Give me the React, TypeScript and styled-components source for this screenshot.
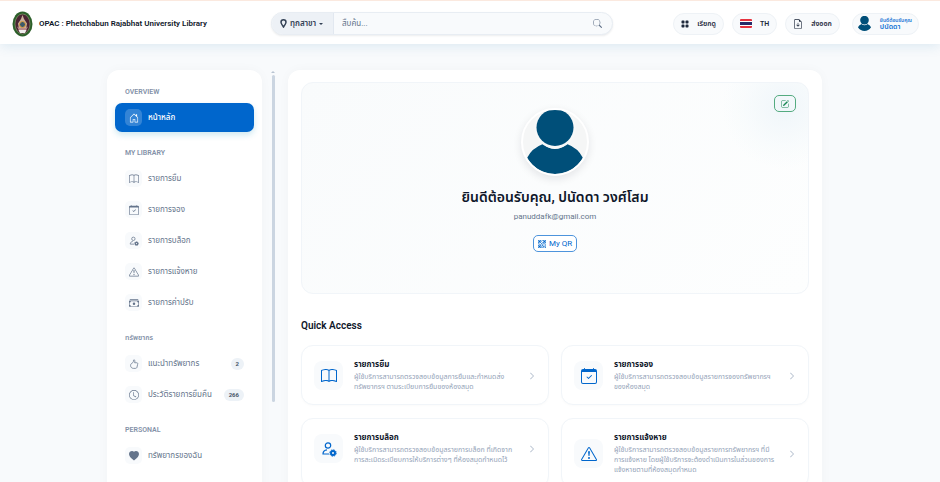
import React from 'react';
import styled, { createGlobalStyle, css } from 'styled-components';
import {
  BsSearch, BsGridFill, BsFileEarmarkArrowDown, BsHouseDoor, BsBook, BsCalendarCheck,
  BsExclamationTriangle, BsCashStack, BsClock, BsHeartFill,
  BsChevronRight, BsQrCode, BsPencilSquare,
} from 'react-icons/bs';

const Global = createGlobalStyle`
  * { box-sizing: border-box; }
  html, body, #root { height: 100%; }
  body { margin: 0; overflow: hidden; background: #f8fafc; color: #0f172a;
    font-family: Roboto, "Noto Sans Thai", "Noto Sans", sans-serif; font-size: 8px; }
  button, input { font: inherit; color: inherit; }
  button { cursor: pointer; }
  a { color: inherit; text-decoration: none; }
  h1, h2, h3, p { margin: 0; }
  svg { display: block; flex: none; }
`;

const Page = styled.div`
  display: flex; flex-direction: column; height: 100vh; overflow: hidden;
`;
const Header = styled.header`
  flex: none; height: 44px; padding: 2px 21px 0 12px;
  display: grid; grid-template-columns: minmax(0, 259fr) minmax(200px, 342px) minmax(0, 306fr);
  align-items: center; background: #fff; border-top: 1px solid #fbe9df;
  box-shadow: 0 2px 12px #0b6ca51f;
`;
const Brand = styled.a`
  display: flex; align-items: center; gap: 6px; font-size: 8px; font-weight: 600; white-space: nowrap;
`;
const Search = styled.form`
  display: flex; height: 23px; border: 1px solid #e8edf3; border-radius: 12px; overflow: hidden;
  background: #f8fafc; box-shadow: 0 1px 2px #0f172a14;
`;
const Branch = styled.button`
  display: flex; align-items: center; gap: 3px; width: 62px; padding: 0 8px; border: 0;
  border-right: 1px solid #e2e8f0; background: #edf1f6; color: #334155; font-weight: 600; white-space: nowrap;
`;
const Caret = styled.span`
  border: 2px solid transparent; border-top-color: currentColor; border-bottom: 0;
`;
const Query = styled.input`
  flex: 1; min-width: 0; padding: 0 8px; border: 0; outline: 0; background: transparent;
  &::placeholder { color: #64748b; opacity: 1; }
`;
const SearchButton = styled.button`
  width: 30px; border: 0; background: transparent; color: #64748b; display: grid; place-items: center;
`;
const Tools = styled.nav`
  display: flex; justify-content: flex-end; gap: 8px;
`;
const Pill = styled.button<{ $user?: boolean }>`
  display: flex; align-items: center; gap: 8px; height: 22px; padding: 0 7px;
  border: 1px solid #eef2f6; border-radius: 11px; background: #f8fafc; color: #1e293b;
  font-size: 7px; font-weight: 600; white-space: nowrap;
  ${p => p.$user && css`margin-left: 4px; padding: 0 6px 0 4px; color: #1473d5;`}
`;
const UserText = styled.span`
  display: grid; text-align: left; font-size: 7px; line-height: 8px; font-weight: 600;
  small { font-size: 5px; line-height: 6px; }
`;

const Body = styled.div`
  flex: 1; min-height: 0; display: flex; align-items: flex-start; justify-content: center;
  padding: 26px 23px 0 12px;
`;
const Shell = styled.div`
  width: 100%; max-width: 715px; display: grid;
  grid-template-columns: 155px 4px minmax(0, 1fr); column-gap: 9px;
`;
const Sidebar = styled.aside`
  padding: 17px 8px 24px; border-radius: 12px; background: #fff; box-shadow: 0 0 12px #0f172a08;
`;
const Track = styled.div`
  display: flex; flex-direction: column; align-items: center; gap: 2px; height: 332px;
`;
const TrackArrow = styled.span`
  margin-top: 1px; border: 2px solid transparent; border-bottom-color: #b8c3d1; border-top: 0;
`;
const TrackThumb = styled.div`
  width: 3px; flex: 1; border-radius: 2px; background: #cbd5e1;
`;
const NavTitle = styled.h2`
  padding-left: 10px; color: #8492a8; font-size: 7px; line-height: 10px; font-weight: 600;
  text-transform: uppercase;
`;
const NavList = styled.ul`
  list-style: none; margin: 6px 0 16px; padding: 0; display: grid; gap: 2px;
`;
const NavLink = styled.a<{ $active?: boolean }>`
  display: flex; align-items: center; gap: 6px; height: 29px; padding: 0 10px; border-radius: 7px;
  color: #64748b; font-size: 8px; font-weight: 400; white-space: nowrap;
  ${p => p.$active && css`background: #0066cc; color: #fff; font-weight: 500; box-shadow: 0 3px 6px #0b8bb633;`}
`;
const NavIcon = styled.span<{ $active?: boolean }>`
  display: grid; place-items: center; width: 17px; height: 17px; border-radius: 5px;
  background: ${p => (p.$active ? '#ffffff33' : '#f8fafc')};
`;
const Badge = styled.span`
  margin-left: auto; padding: 0 5px; border-radius: 6px; background: #edf2f7; color: #475569;
  font-size: 6px; line-height: 12px; font-weight: 700;
`;

const Main = styled.main`
  margin-left: 4px; padding: 12px 13px; border-radius: 12px; background: #fff; box-shadow: 0 0 12px #0f172a08;
`;
const Hero = styled.section`
  position: relative; display: flex; flex-direction: column; align-items: center;
  min-height: 212px; padding: 25px 12px; border: 1px solid #f1f5f9; border-radius: 12px;
  background: radial-gradient(circle at calc(100% - 24px) 24px, #f0f6fa 0, #f4f9fb66 42px, transparent 62px),
    linear-gradient(135deg, #f9fbfc, #fdfefe);
`;
const Edit = styled.button`
  position: absolute; top: 12px; right: 12px; display: grid; place-items: center;
  width: 22px; height: 17px; border: 1px solid #54ab80; border-radius: 5px; background: transparent; color: #198754;
`;
const Avatar = styled.div`
  width: 68px; height: 68px; border: 2px solid #fff; border-radius: 50%; overflow: hidden;
  background: #f5f6f6; box-shadow: 0 3px 8px #0f172a1a;
`;
const Welcome = styled.h1`
  margin-top: 10px; font-size: 14px; line-height: 22px; font-weight: 600; text-align: center;
`;
const Email = styled.p`
  margin-top: 3px; color: #64748b; font-size: 8px; line-height: 12px;
`;
const QrButton = styled.button`
  display: flex; align-items: center; gap: 3px; height: 17px; margin-top: 12px; padding: 0 4px;
  border: 1px solid #4d94dc; border-radius: 5px; background: #fff; color: #0066cc; font-size: 8px; font-weight: 400;
`;
const SectionTitle = styled.h2`
  margin: 24px 0 11px; font-size: 10px; line-height: 16px; font-weight: 600;
`;
const Cards = styled.div`
  display: grid; grid-template-columns: repeat(2, minmax(0, 1fr)); gap: 13px 12px;
`;
const Card = styled.a`
  padding: 13px 12px 12px; border: 1px solid #f1f5f9; border-radius: 12px; background: #fff;
  box-shadow: 0 1px 3px #0f172a05;
`;
const CardRow = styled.div`
  display: flex; align-items: center; gap: 11px;
`;
const CardIcon = styled.span`
  display: grid; place-items: center; flex: none; width: 29px; height: 29px; border-radius: 8px;
  background: #f8fafc; color: #0066cc;
`;
const CardText = styled.div`
  flex: 1; min-width: 0; white-space: nowrap;
  h3 { font-size: 8px; line-height: 12px; font-weight: 700; }
  p { margin-top: 1px; color: #94a3b8; font-size: 7px; line-height: 10px; }
`;

const Person = ({ size }: { size: number }) => (
  <svg width={size} height={size} viewBox="0 0 64 64" fill="#004f79" aria-hidden="true">
    <path d="M20 34Q32 44 44 34Q55 38 60 48Q49 64 32 64T4 48Q9 38 20 34Z" />
    <circle cx="32" cy="17.500" r="21" fill="#f7f8f8" />
    <circle cx="32" cy="17.500" r="18.500" />
  </svg>
);
const Crest = () => (
  <svg width="21" height="26" viewBox="0 0 42 52" aria-hidden="true">
    <ellipse cx="21" cy="26" rx="20" ry="25" fill="#2c5f2a" />
    <ellipse cx="21" cy="26" rx="15" ry="20" fill="#4a2433" stroke="#a3b584" />
    <path d="M21 8l3 8 6 9-2 12H14l-2-12 6-9z" fill="#c9b09a" />
    <path d="M10 31l5 10h12l5-10-5 3H15z" fill="#b98a8a" />
    <circle cx="21" cy="27" r="6" fill="#3c5a6a" stroke="#e1a03c" strokeWidth="2" />
    <path d="M13 38h16l-3 6H16z" fill="#f0eeee" />
  </svg>
);
const Flag = () => (
  <svg width="12" height="9" viewBox="0 0 12 9" aria-hidden="true">
    <rect width="12" height="9" rx="1" fill="#e6333f" />
    <path fill="#fff" d="M0 2h12v5H0z" />
    <path fill="#292b68" d="M0 3h12v3H0z" />
  </svg>
);
const Pin = () => (
  <svg width="7" height="9" viewBox="0 0 14 18" fill="none" stroke="currentColor" strokeWidth="3" aria-hidden="true">
    <path d="M7 16C4 12 2 9 2 6.500a5 5 0 0 1 10 0C12 9 10 12 7 16Z" />
  </svg>
);

type IconProps = { size?: number };
type Icon = React.ComponentType<IconProps>;

const PersonGear = ({ size = 16 }: IconProps) => (
  <svg width={size} height={size} viewBox="0 0 16 16" fill="none" stroke="currentColor" aria-hidden="true">
    <circle cx="7" cy="4.500" r="2.700" strokeWidth="1.200" />
    <path d="M8 13H2c0-2.500 1.500-4 4-4.200" strokeWidth="1.200" />
    <circle cx="12" cy="12" r="2" strokeWidth="2" />
    <circle cx="12" cy="12" r="3.200" strokeDasharray="1.500 1" />
  </svg>
);
const Thumb = ({ size = 16 }: IconProps) => (
  <svg width={size} height={size} viewBox="0 0 16 16" fill="none" stroke="currentColor" strokeWidth="1.200" aria-hidden="true">
    <path d="M5 6.500C7 5.500 7.200 4 7.200 2c0-1 2.300-1 2.300 1.200 0 1-.3 2-.5 2.800h3.500c1.700 0 1.600 1.500 1.300 2.500l-1 4.500c-.3 1.500-1.300 2-2.800 2H7c-2.500 0-4.500-2-4.500-4.500 0-2 1-3.300 2.500-4Z" />
  </svg>
);

type Item = { icon: Icon; label: string; count?: number; active?: boolean };
const groups: { title: string; items: Item[] }[] = [
  { title: 'Overview', items: [{ icon: BsHouseDoor, label: 'หน้าหลัก', active: true }] },
  { title: 'My Library', items: [
    { icon: BsBook, label: 'รายการยืม' },
    { icon: BsCalendarCheck, label: 'รายการจอง' },
    { icon: PersonGear, label: 'รายการบล็อก' },
    { icon: BsExclamationTriangle, label: 'รายการแจ้งหาย' },
    { icon: BsCashStack, label: 'รายการค่าปรับ' },
  ] },
  { title: 'ทรัพยากร', items: [
    { icon: Thumb, label: 'แนะนำทรัพยากร', count: 2 },
    { icon: BsClock, label: 'ประวัติรายการยืมคืน', count: 266 },
  ] },
  { title: 'Personal', items: [{ icon: BsHeartFill, label: 'ทรัพยากรของฉัน' }] },
];
const cards: { icon: Icon; title: string; lines: string[] }[] = [
  { icon: BsBook, title: 'รายการยืม', lines: ['ผู้ใช้บริการสามารถตรวจสอบข้อมูลการยืมและกำหนดส่ง', 'ทรัพยากรฯ ตามระเบียบการยืมของห้องสมุด'] },
  { icon: BsCalendarCheck, title: 'รายการจอง', lines: ['ผู้ใช้บริการสามารถตรวจสอบข้อมูลรายการจองทรัพยากรฯ', 'ของห้องสมุด'] },
  { icon: PersonGear, title: 'รายการบล็อก', lines: ['ผู้ใช้บริการสามารถตรวจสอบข้อมูลรายการบล็อก ที่เกิดจาก', 'การละเมิดระเบียบการให้บริการต่างๆ ที่ห้องสมุดกำหนดไว้'] },
  { icon: BsExclamationTriangle, title: 'รายการแจ้งหาย', lines: ['ผู้ใช้บริการสามารถตรวจสอบข้อมูลรายการทรัพยากรฯ ที่มี', 'การแจ้งหาย โดยผู้ใช้บริการจะต้องดำเนินการในส่วนของการ', 'แจ้งหายตามที่ห้องสมุดกำหนด'] },
];

export default function App() {
  return (
    <Page>
      <Global />
      <Header>
        <Brand href="#"><Crest />OPAC : Phetchabun Rajabhat University Library</Brand>
        <Search role="search">
          <Branch type="button"><Pin />ทุกสาขา<Caret /></Branch>
          <Query aria-label="สืบค้น" placeholder="สืบค้น..." />
          <SearchButton type="button" aria-label="ค้นหา"><BsSearch size={9} /></SearchButton>
        </Search>
        <Tools>
          <Pill><BsGridFill size={8} />เรียกดู</Pill>
          <Pill><Flag />TH</Pill>
          <Pill><BsFileEarmarkArrowDown size={10} />ส่งออก</Pill>
          <Pill $user><Person size={15} /><UserText><small>ยินดีต้อนรับคุณ</small>ปนัดดา</UserText></Pill>
        </Tools>
      </Header>
      <Body>
        <Shell>
          <Sidebar>
            {groups.map(g => (
              <nav key={g.title} aria-label={g.title}>
                <NavTitle>{g.title}</NavTitle>
                <NavList>
                  {g.items.map(({ icon: I, ...it }) => (
                    <li key={it.label}>
                      <NavLink href="#" $active={it.active}>
                        <NavIcon $active={it.active}><I size={10} /></NavIcon>
                        {it.label}
                        {it.count && <Badge>{it.count}</Badge>}
                      </NavLink>
                    </li>
                  ))}
                </NavList>
              </nav>
            ))}
          </Sidebar>
          <Track><TrackArrow /><TrackThumb /></Track>
          <Main>
            <Hero>
              <Edit aria-label="แก้ไข"><BsPencilSquare size={8} /></Edit>
              <Avatar><Person size={64} /></Avatar>
              <Welcome>ยินดีต้อนรับคุณ, ปนัดดา วงศ์โสม</Welcome>
              <Email>panuddafk@gmail.com</Email>
              <QrButton><BsQrCode size={8} />My QR</QrButton>
            </Hero>
            <SectionTitle>Quick Access</SectionTitle>
            <Cards>
              {cards.map(({ icon: I, title, lines }) => (
                <Card href="#" key={title}>
                  <CardRow>
                    <CardIcon><I size={16} /></CardIcon>
                    <CardText>
                      <h3>{title}</h3>
                      <p>{lines.map((l, i) => <React.Fragment key={l}>{i > 0 && <br />}{l}</React.Fragment>)}</p>
                    </CardText>
                    <BsChevronRight size={8} color="#94a3b8" />
                  </CardRow>
                </Card>
              ))}
            </Cards>
          </Main>
        </Shell>
      </Body>
    </Page>
  );
}
